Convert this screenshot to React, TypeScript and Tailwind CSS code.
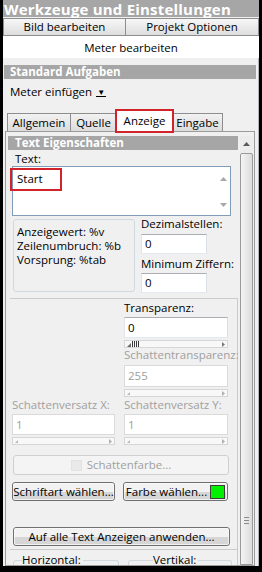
import React from "react";

function Tri({ dir, color = "#5a5a5a", s = 7 }: { dir: "up" | "down" | "left" | "right"; color?: string; s?: number }) {
  const h = Math.ceil(s / 2) + 0;
  if (dir === "up" || dir === "down") {
    const d = dir === "up" ? `M0 ${h}L${s / 2} 0L${s} ${h}Z` : `M0 0L${s} 0L${s / 2} ${h}Z`;
    return (
      <svg width={s} height={h} viewBox={`0 0 ${s} ${h}`}>
        <path d={d} fill={color} />
      </svg>
    );
  }
  const d = dir === "left" ? `M${h} 0L${h} ${s}L0 ${s / 2}Z` : `M0 0L${h} ${s / 2}L0 ${s}Z`;
  return (
    <svg width={h} height={s} viewBox={`0 0 ${h} ${s}`}>
      <path d={d} fill={color} />
    </svg>
  );
}

function Slider({ active }: { active?: boolean }) {
  return (
    <div className="h-[8px] border border-[#d6d6d6] bg-[#f8f8f8] flex items-center justify-between pl-[2px] pr-[2px]">
      {active ? (
        <div className="flex items-end gap-[1px] h-[6px]">
          <svg width="4" height="4" viewBox="0 0 4 4">
            <path d="M0 4L4 0V4Z" fill="#6a6a6a" />
          </svg>
          <div className="w-[1px] h-[6px] bg-[#3a3a3a]" />
          <div className="w-[1px] h-[6px] bg-[#3a3a3a]" />
          <div className="w-[1px] h-[6px] bg-[#3a3a3a]" />
          <div className="w-[1px] h-[6px] bg-[#3a3a3a]" />
        </div>
      ) : (
        <svg width="3" height="3" viewBox="0 0 3 3">
          <path d="M0 3L3 0V3Z" fill="#b8b8b8" />
        </svg>
      )}
      <svg width="3" height="5" viewBox="0 0 3 5">
        <path d="M0 0L3 2.5L0 5Z" fill={active ? "#7a7a7a" : "#b0b0b0"} />
      </svg>
    </div>
  );
}

function Input({ v, disabled, h = "h-[21px]" }: { v: string; disabled?: boolean; h?: string }) {
  return (
    <div
      className={
        disabled
          ? `${h} bg-white border border-[#dadada] text-[#9d9d9d] flex items-center pl-[3px]`
          : `${h} bg-white border border-[#abadb3] border-l-[#e2e3ea] border-r-[#dbdfe6] border-b-[#e3e9ef] flex items-center pl-[3px]`
      }
    >
      {v}
    </div>
  );
}

function Button({ children, className }: { children: React.ReactNode; className: string }) {
  return (
    <div
      className={`border border-[#707070] rounded-[3px] bg-linear-to-b from-[#f2f2f2] from-50% to-[#d6d6d6] to-50% flex items-center justify-center ${className}`}
    >
      <div className="w-full h-full rounded-[2px] border border-[#fbfbfb]/70 flex items-center justify-center">{children}</div>
    </div>
  );
}

function Tab({ label, w }: { label: string; w: string }) {
  return (
    <div
      className={`${w} h-[18px] border border-b-0 border-[#8d8d8d] bg-linear-to-b from-[#f2f2f2] to-[#dcdcdc] flex items-center justify-center -ml-[1px] first:ml-0`}
    >
      {label}
    </div>
  );
}

export default function App() {
  return (
    <div className="w-[262px] h-[572px] bg-black overflow-hidden flex flex-col pl-[3px] pr-[3px] pb-[6px] font-['Open_Sans',sans-serif] text-[11.5px] leading-[14px] text-black">
      <div className="flex-1 flex flex-col bg-[#f0f0f0] overflow-hidden min-h-0">
        {/* title */}
        <div className="h-[17px] shrink-0 bg-[#a6a6a6] text-white font-bold text-[15px] tracking-[0.2px] flex items-center pl-[1px] whitespace-nowrap">
          Werkzeuge und Einstellungen
        </div>
        {/* top buttons */}
        <div className="h-[18px] shrink-0 flex mt-[1px]">
          <div className="w-[123px] border border-[#8e8e8e] bg-linear-to-b from-[#f7f7f7] to-[#dedede] flex items-center justify-center">
            Bild bearbeiten
          </div>
          <div className="flex-1 border border-l-0 border-[#8e8e8e] bg-linear-to-b from-[#f7f7f7] to-[#dedede] flex items-center justify-center">
            Projekt Optionen
          </div>
        </div>
        <div className="h-[22px] shrink-0 bg-white flex items-center justify-center pt-[2px]">Meter bearbeiten</div>

        <div className="flex-1 min-h-0 flex flex-col border-r border-[#b4b4b4] bg-[#f0f0f0]">
          {/* Standard Aufgaben */}
          <div className="h-[14px] shrink-0 mt-[7px] ml-[1px] mr-[2px] bg-[#a6a6a6] text-white font-bold flex items-center pl-[6px]">
            Standard Aufgaben
          </div>
          <div className="h-[16px] shrink-0 mt-[5px] pl-[7px] flex items-center gap-[4px]">
            <span>Meter einfügen</span>
            <span className="border-b border-black text-[8px] leading-[9px] px-[1px]">▼</span>
          </div>

          {/* tabs */}
          <div className="h-[23px] shrink-0 mt-[8px] pl-[4px] flex items-end">
            <Tab label="Allgemein" w="w-[64px]" />
            <Tab label="Quelle" w="w-[47px]" />
            <div className="relative -ml-[1px] w-[57px] h-[21px] border border-b-0 border-[#8d8d8d] bg-white flex items-center justify-center z-10">
              Anzeige
              <div className="absolute -left-[2px] -right-[2px] -top-[2px] -bottom-[2px] border-2 border-[#d2232a]" />
            </div>
            <Tab label="Eingabe" w="w-[51px]" />
          </div>

          {/* tab panel */}
          <div className="flex-1 min-h-0 ml-[2px] w-[250px] border border-[#9c9c9c] bg-[#f0f0f0] flex overflow-hidden">
            {/* content */}
            <div className="ml-[2px] mt-[4px] w-[230px] flex flex-col shrink-0">
              <div className="h-[14px] shrink-0 bg-[#a6a6a6] text-white font-bold flex items-center pl-[7px]">
                Text Eigenschaften
              </div>
              <div className="h-[16px] shrink-0 pl-[7px] pt-[2px]">Text:</div>
              {/* textarea */}
              <div className="relative ml-[4px] w-[219px] h-[50px] shrink-0 bg-white border border-[#7f9db9] flex">
                <div className="flex-1 pl-[4px] pt-[5px]">Start</div>
                <div className="w-[14px] flex flex-col items-center justify-between pt-[10px] pb-[8px]">
                  <Tri dir="up" color="#a8a8a8" />
                  <Tri dir="down" color="#a8a8a8" />
                </div>
                <div className="absolute left-[-3px] top-[1px] w-[52px] h-[23px] border-2 border-[#d2232a]" />
              </div>
              {/* row: group + decimals */}
              <div className="flex shrink-0 mt-[1px]">
                <div className="ml-[5px] mt-[2px] w-[122px] h-[73px] border border-[#cfd9e0] rounded-[3px] pl-[3px] pt-[5px]">
                  <div>Anzeigewert: %v</div>
                  <div>Zeilenumbruch: %b</div>
                  <div>Vorsprung: %tab</div>
                </div>
                <div className="ml-[6px] w-[92px] flex flex-col">
                  <div className="h-[17px] whitespace-nowrap">Dezimalstellen:</div>
                  <div className="w-[66px]">
                    <Input v="0" h="h-[20px]" />
                  </div>
                  <div className="h-[14px] mt-[3px] whitespace-nowrap">Minimum Ziffern:</div>
                  <div className="w-[66px] mt-[2px]">
                    <Input v="0" h="h-[20px]" />
                  </div>
                </div>
              </div>
              {/* lower box */}
              <div className="mt-[5px] ml-[2px] w-[228px] flex-1 border-t border-r border-[#cbcbcb] flex flex-col">
                <div className="ml-[114px] w-[104px] flex flex-col">
                  <div className="h-[14px] mt-[2px]">Transparenz:</div>
                  <div className="mt-[2px]">
                    <Input v="0" />
                  </div>
                  <div className="mt-[2px]">
                    <Slider active />
                  </div>
                  <div className="h-[14px] whitespace-nowrap text-[#a0a0a0]">Schattentransparenz:</div>
                  <div className="mt-[3px]">
                    <Input v="255" disabled h="h-[22px]" />
                  </div>
                  <div className="mt-[2px]">
                    <Slider />
                  </div>
                </div>
                <div className="flex ml-[2px] mt-[1px]">
                  <div className="w-[103px] flex flex-col">
                    <div className="h-[14px] whitespace-nowrap text-[#a0a0a0]">Schattenversatz X:</div>
                    <div className="mt-[2px]">
                      <Input v="1" disabled />
                    </div>
                    <div className="mt-[2px]">
                      <Slider />
                    </div>
                  </div>
                  <div className="ml-[9px] w-[104px] flex flex-col">
                    <div className="h-[14px] whitespace-nowrap text-[#a0a0a0]">Schattenversatz Y:</div>
                    <div className="mt-[2px]">
                      <Input v="1" disabled />
                    </div>
                    <div className="mt-[2px]">
                      <Slider />
                    </div>
                  </div>
                </div>
                {/* Schattenfarbe disabled */}
                <div className="mt-[10px] ml-[3px] w-[216px] h-[20px] border border-[#d0d0d0] rounded-[3px] bg-[#f4f4f4] flex items-center justify-center gap-[5px] text-[#a0a0a0]">
                  <div className="w-[11px] h-[11px] bg-[#e9e9e9] border border-[#e2e2e2]" />
                  <span>Schattenfarbe...</span>
                </div>
                <div className="flex mt-[7px]">
                  <Button className="ml-[2px] w-[103px] h-[19px]">
                    <span className="whitespace-nowrap">Schriftart wählen...</span>
                  </Button>
                  <Button className="ml-[8px] w-[105px] h-[19px]">
                    <span className="whitespace-nowrap">Farbe wählen...</span>
                    <span className="ml-[3px] w-[15px] h-[14px] bg-[#00f000] border border-[#3c3c3c]" />
                  </Button>
                </div>
                <Button className="mt-[26px] ml-[3px] w-[217px] h-[19px]">
                  <span className="whitespace-nowrap">Auf alle Text Anzeigen anwenden...</span>
                </Button>
                <div className="mt-[3px] border-t border-[#cbcbcb]" />
                <div className="flex mt-[10px]">
                  <div className="relative ml-[3px] w-[106px] h-[20px] border border-b-0 border-[#cfd9e0] rounded-t-[3px]">
                    <span className="absolute left-[8px] -top-[8px] bg-[#f0f0f0] pr-[2px]">Horizontal:</span>
                  </div>
                  <div className="relative ml-[9px] w-[104px] h-[20px] border border-b-0 border-[#cfd9e0] rounded-t-[3px]">
                    <span className="absolute left-[24px] -top-[8px] bg-[#f0f0f0] pr-[2px]">Vertikal:</span>
                  </div>
                </div>
              </div>
            </div>
            {/* scrollbar */}
            <div className="ml-[2px] mt-[4px] w-[13px] flex flex-col shrink-0 bg-[#ececec]">
              <div className="h-[16px] flex items-center justify-center">
                <Tri dir="up" color="#5a5a5a" />
              </div>
              <div className="flex-1 mt-[1px] border border-[#9a9a9a] rounded-t-[2px] bg-linear-to-r from-[#f4f4f4] to-[#dcdcdc] flex flex-col items-center pt-[363px] gap-[2px]">
                <div className="w-[5px] h-[1px] bg-[#8a8a8a]" />
                <div className="w-[5px] h-[1px] bg-[#8a8a8a]" />
                <div className="w-[5px] h-[1px] bg-[#8a8a8a]" />
              </div>
            </div>
          </div>
        </div>
      </div>
    </div>
  );
}
